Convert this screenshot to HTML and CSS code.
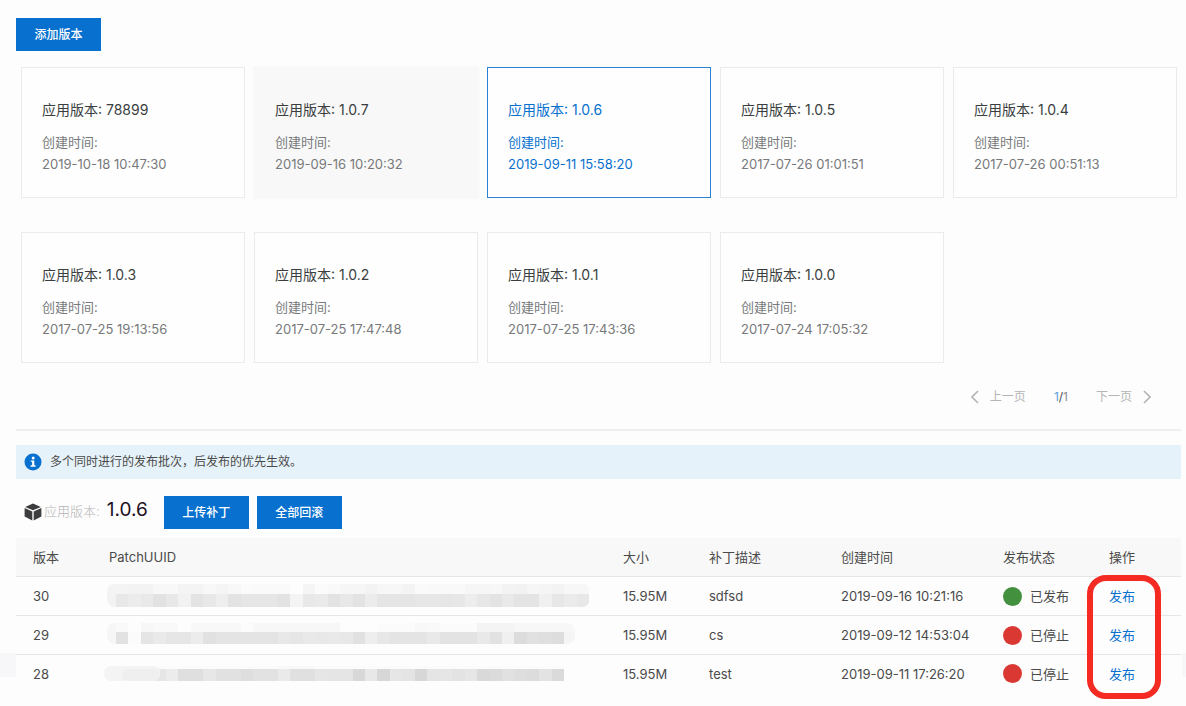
FILE: index.html
```html
<!DOCTYPE html>
<html lang="zh-CN">
<head>
<meta charset="utf-8">
<meta name="viewport" content="width=device-width, initial-scale=1">
<title>版本管理</title>
<link rel="stylesheet" href="styles.css">
</head>
<body>
<main class="page">
  <div class="actions"><button class="btn" type="button">添加版本</button></div>

  <section class="versions">
    <button class="card" type="button"><span class="card-title">应用版本: 78899</span><span class="card-meta">创建时间:<br>2019-10-18 10:47:30</span></button>
    <button class="card card-hover" type="button"><span class="card-title">应用版本: 1.0.7</span><span class="card-meta">创建时间:<br>2019-09-16 10:20:32</span></button>
    <button class="card card-active" type="button"><span class="card-title">应用版本: 1.0.6</span><span class="card-meta">创建时间:<br>2019-09-11 15:58:20</span></button>
    <button class="card" type="button"><span class="card-title">应用版本: 1.0.5</span><span class="card-meta">创建时间:<br>2017-07-26 01:01:51</span></button>
    <button class="card" type="button"><span class="card-title">应用版本: 1.0.4</span><span class="card-meta">创建时间:<br>2017-07-26 00:51:13</span></button>
    <button class="card" type="button"><span class="card-title">应用版本: 1.0.3</span><span class="card-meta">创建时间:<br>2017-07-25 19:13:56</span></button>
    <button class="card" type="button"><span class="card-title">应用版本: 1.0.2</span><span class="card-meta">创建时间:<br>2017-07-25 17:47:48</span></button>
    <button class="card" type="button"><span class="card-title">应用版本: 1.0.1</span><span class="card-meta">创建时间:<br>2017-07-25 17:43:36</span></button>
    <button class="card" type="button"><span class="card-title">应用版本: 1.0.0</span><span class="card-meta">创建时间:<br>2017-07-24 17:05:32</span></button>
  </section>

  <nav class="pager" aria-label="分页">
    <button class="pager-btn" type="button">
      <svg width="8" height="14" viewBox="0 0 8 14"><path d="M7 1L1 7l6 6"/></svg>上一页
    </button>
    <span class="pager-count"><span class="pager-now">1</span>/<span class="pager-total">1</span></span>
    <button class="pager-btn" type="button">下一页
      <svg width="8" height="14" viewBox="0 0 8 14"><path d="M1 1l6 6-6 6"/></svg>
    </button>
  </nav>

  <hr class="divider">

  <p class="notice">
    <svg width="18" height="18" viewBox="0 0 18 18"><circle cx="9" cy="9" r="8.5" fill="#0871cf"/><circle cx="9.2" cy="4.9" r="1.5" fill="#fff"/><path d="M6.8 7.4h3.5v4.9h1.3v1.4H6.6v-1.4h1.5V8.8H6.8z" fill="#fff"/></svg>
    多个同时进行的发布批次，后发布的优先生效。
  </p>

  <div class="toolbar">
    <svg class="cube" width="18" height="18" viewBox="0 0 18 18" fill="#3d3d3f"><path d="M9 .6l7.8 3.3L9 7.3 1.2 3.9z"/><path d="M.6 5.1l7.7 3.4v8.9L.6 13.6z"/><path d="M17.4 5.1L9.7 8.5v8.9l7.7-3.8z"/></svg>
    <span class="toolbar-text"><span class="toolbar-label">应用版本:</span><strong class="toolbar-version">1.0.6</strong></span>
    <button class="btn" type="button">上传补丁</button>
    <button class="btn" type="button">全部回滚</button>
  </div>

  <div class="table-wrap">
    <table class="patches">
      <colgroup><col class="c-ver"><col><col class="c-size"><col class="c-desc"><col class="c-time"><col class="c-state"><col class="c-act"></colgroup>
      <thead>
        <tr><th>版本</th><th>PatchUUID</th><th>大小</th><th>补丁描述</th><th>创建时间</th><th>发布状态</th><th>操作</th></tr>
      </thead>
      <tbody>
        <tr><td>30</td><td class="uuid"><svg class="mask" data-row="0" width="486" height="24"></svg></td><td>15.95M</td><td>sdfsd</td><td>2019-09-16 10:21:16</td><td><span class="state"><i class="dot dot-on"></i>已发布</span></td><td><a href="#">发布</a></td></tr>
        <tr><td>29</td><td class="uuid"><svg class="mask" data-row="1" width="486" height="24"></svg></td><td>15.95M</td><td>cs</td><td>2019-09-12 14:53:04</td><td><span class="state"><i class="dot dot-off"></i>已停止</span></td><td><a href="#">发布</a></td></tr>
        <tr><td>28</td><td class="uuid"><svg class="mask" data-row="2" width="486" height="24"></svg></td><td>15.95M</td><td>test</td><td>2019-09-11 17:26:20</td><td><span class="state"><i class="dot dot-off"></i>已停止</span></td><td><a href="#">发布</a></td></tr>
      </tbody>
    </table>
    <div class="highlight"></div>
  </div>
</main>
<script src="mask.js"></script>
</body>
</html>
```
FILE: styles.css
```css
* { box-sizing: border-box; }

body {
  margin: 0;
  background: #fdfdfd;
  color: #4a4a4a;
  font: 13px/22px Inter, "Noto Sans CJK SC", sans-serif;
}

button { font: inherit; cursor: pointer; }

.page { padding: 18px 5px 12px 16px; }

.actions { display: flex; }

.btn {
  min-width: 85px;
  height: 33px;
  padding: 0 16px;
  border: 0;
  background: #0871cf;
  color: #fff;
  font-size: 12px;
  font-weight: 500;
}

.versions {
  display: grid;
  grid-template-columns: repeat(5, 1fr);
  gap: 34px 9px;
  padding: 16px 4px 0 5px;
}

.card {
  display: flex;
  flex-direction: column;
  gap: 10px;
  height: 131px;
  padding: 31px 20px 0;
  border: 1px solid #ebebeb;
  background: #fefefe;
  color: #77797b;
  text-align: left;
}

.card-title { color: #3a3e41; font-size: 14px; }
.card-meta { line-height: 22px; }
.card-hover { border-color: #f8f8f8; background: #f8f8f8; box-shadow: 0 0 2px 1px #f8f8f8; }
.card-active { border-color: #2b82d3; color: #0871cf; }
.card-active .card-title { color: #0871cf; }

.pager {
  display: flex;
  justify-content: flex-end;
  gap: 28px;
  padding: 23px 30px 21px 0;
  font-size: 12px;
}

.pager-btn {
  display: flex;
  align-items: center;
  gap: 11px;
  padding: 0;
  border: 0;
  background: none;
  color: #b5b5b5;
}

.pager-btn svg { fill: none; stroke: #b5b5b5; stroke-width: 1.6; }
.pager-now { color: #5b9fdb; }
.pager-total { color: #8c8c8c; }

.divider { margin: 0; border: 0; border-top: 2px solid #efefef; }

.notice {
  display: flex;
  align-items: center;
  gap: 8px;
  height: 34px;
  margin: 14px 0 17px;
  padding: 0 8px;
  background: #e6f2f9;
  font-size: 12px;
}

.toolbar {
  display: flex;
  align-items: center;
  gap: 8px;
  padding-left: 8px;
}

.cube { margin: 0 -6px 2px 0; }
.toolbar-text { display: flex; align-items: baseline; gap: 7px; margin-right: 8px; padding-bottom: 5px; }
.toolbar-label { color: #b4b4b4; font-weight: 300; }
.toolbar-version { color: #1d1022; font-size: 19px; font-weight: 400; }

.table-wrap { position: relative; margin-top: 9px; }

/* Edges of the side panels that show beside the table */
.table-wrap::before, .table-wrap::after {
  content: "";
  position: absolute;
  top: 115px;
  height: 24px;
  background: #f7f7f9;
}
.table-wrap::before { left: -16px; width: 16px; }
.table-wrap::after { right: -5px; width: 4px; }

.patches {
  width: 100%;
  border-collapse: separate;
  border-spacing: 0;
  table-layout: fixed;
}

.patches th, .patches td {
  height: 39px;
  padding: 0 0 0 17px;
  border-bottom: 1px solid #e6e6e6;
  font-weight: 400;
  text-align: left;
  white-space: nowrap;
}

.patches th { background: #f8f8f8; }
.patches tbody tr:last-child td { height: 37px; border-bottom: 0; }
.patches a { color: #0871cf; text-decoration: none; }
.patches .uuid { padding: 0 0 0 12px; }

.c-ver { width: 76px; }
.c-size { width: 86px; }
.c-desc { width: 132px; }
.c-time { width: 162px; }
.c-state { width: 106px; }
.c-act { width: 89px; }

.mask { display: block; }
.state { display: flex; align-items: center; gap: 8px; }
.dot { width: 19px; height: 19px; border-radius: 50%; }
.dot-on { background: #43903f; }
.dot-off { background: #da3832; }

.highlight {
  position: absolute;
  top: 37px;
  right: 20px;
  bottom: -7px;
  width: 74px;
  border: 6px solid #f52a22;
  border-radius: 19px;
  pointer-events: none;
}
```
FILE: mask.js
```js
// Draws the mosaic that hides each patch UUID: two bands of grey cells per row.
const NS = "http://www.w3.org/2000/svg";
const STEP = 12.45;
const rows = [
  {
    top: "f4f3f3f8f8f4f4f8f5f8fbfafafafdf5fbf9f6f6f3f7f7f4faf9f9f9f6f6f7f3f2f6f5f3f7f7",
    low: "e8ece9e2e8f2e3e8eee3e6e6e6e2f4e8eae3e8e3ece5e5e5e7e7e6e7ede7e3e9e4e4f0e7ebe8",
    lead: "f3", x: 3, end: 486, y: 0, mid: 10, bottom: 23, r: 8
  },
  {
    top: "f9fdf7f9f9fdf8f8f8f8fcf7f7f7f7f7f7f7fdfdfdfbfbfbf8f9fbfbfbf4f4f4f7f7f7f7f7",
    low: "e2fbe5eae6e6ece1e4e4e4e4e4e8e6e9e8e9e8e1eee7e4e4e4e9e3e3e3e9e2f0dce1dfddf5",
    lead: "f6", x: 3, end: 471, y: 0, mid: 9, bottom: 21, r: 8
  },
  {
    top: "fdfdfbfbfbfbfbfbfbfbfbfbfbf8f8f8fbfbfbfbfbfbfbfbfbfbfbfbfbfbfbfbfbfbfbfb",
    low: "fdfde6e6ecdfdfe7e1e1dee2e2eae0e0e6e5e5d8e8d7e6e4d7e5e6e3e6d9dbe1dedce3da",
    lead: "fd", x: 12, end: 461, y: 4, mid: 7, bottom: 19, r: 0, pill: true
  }
];

function rect(parent, x, y, w, h, grey, rx) {
  const el = document.createElementNS(NS, "rect");
  const attrs = { x, y, width: w, height: h, fill: "#" + grey + grey + grey, rx: rx || 0 };
  for (const k in attrs) el.setAttribute(k, attrs[k]);
  parent.appendChild(el);
  return el;
}

document.querySelectorAll(".mask").forEach(svg => {
  const n = Number(svg.dataset.row), row = rows[n];
  const clip = document.createElementNS(NS, "clipPath");
  clip.id = "mask-" + n;
  rect(clip, row.x, row.y, row.end - row.x, row.bottom - row.y, "00", row.r);
  const g = document.createElementNS(NS, "g");
  g.setAttribute("clip-path", "url(#mask-" + n + ")");
  g.setAttribute("shape-rendering", "crispEdges");
  rect(g, row.x, row.y, 9, row.bottom - row.y, row.lead);
  for (let i = 0; i * 2 < row.low.length; i++) {
    const x = Math.round(12 + i * STEP), w = Math.round(12 + (i + 1) * STEP) - x;
    rect(g, x, row.y, w, row.mid - row.y, row.top.substr(i * 2, 2));
    rect(g, x, row.mid, w, row.bottom - row.mid, row.low.substr(i * 2, 2));
  }
  svg.append(clip, g);
  if (row.pill) {
    rect(svg, 0, 4, 56, 15, "f4", 7);
    rect(svg, 18, 7, 37, 12, "ef", 5);
  }
});
```
